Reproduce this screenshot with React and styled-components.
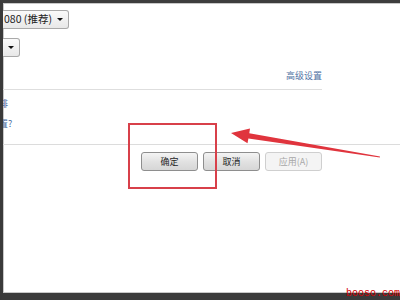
import React from 'react';
import styled, { createGlobalStyle } from 'styled-components';

const Global = createGlobalStyle`
  html, body {
    margin: 0;
    padding: 0;
    background: #ffffff;
  }
  body {
    font-family: "Noto Sans CJK SC", "Noto Sans", sans-serif;
  }
`;

export default function App() {
  return (
    <>
      <Global />
      <Page>
        <Frame>
          <Select $width={66}>
            <SelectText>080 (推荐)</SelectText>
            <Caret />
          </Select>
          <Select $width={17} $gap={9}>
            <Caret />
          </Select>
          <LinkRow>
            <Link>高级设置</Link>
          </LinkRow>
          <Rule />
          <Clipped $top={8}>排</Clipped>
          <Clipped $top={8}>置?</Clipped>
          <Separator />
          <Buttons>
            <Button>确定</Button>
            <Button>取消</Button>
            <Button disabled>应用(A)</Button>
          </Buttons>
        </Frame>

        <Highlight />
        <Arrow viewBox="0 0 400 300">
          <polygon
            points="231,133 250,128.6 249.3,133.3 380,156.4 379.8,157.6 248.4,138.4 247.5,143.2"
            fill="#e0343d"
          />
        </Arrow>
        <Watermark>booso.com</Watermark>
      </Page>
    </>
  );
}

const Page = styled.div`
  position: relative;
  width: 400px;
  height: 300px;
  overflow: hidden;
`;

const Frame = styled.div`
  box-sizing: border-box;
  width: 400px;
  height: 300px;
  overflow: hidden;
  background: #ffffff;
  border-top: 3px solid #3d3d3d;
  border-left: 3px solid #3a3a3a;
  border-bottom: 7px solid #3b3b3b;
  box-shadow: inset 1px 1px 0 #c8c8c8, inset 0 -1px 0 #c8c8c8;
  display: flex;
  flex-direction: column;
`;

const Select = styled.div`
  box-sizing: border-box;
  width: ${(p) => p.$width}px;
  height: 19px;
  margin-top: ${(p) => p.$gap || 7}px;
  display: flex;
  align-items: center;
  justify-content: space-between;
  border: 1px solid #a9a9a9;
  border-left: none;
  border-radius: 0 3px 3px 0;
  background: linear-gradient(#fafafa, #e8e8e8);
  padding: 0 5px 0 0;
`;

const SelectText = styled.span`
  font-size: 10.5px;
  color: #222;
  padding-left: 1px;
  white-space: nowrap;
  line-height: 1;
`;

const Caret = styled.span`
  margin-left: auto;
  width: 0;
  height: 0;
  border-left: 3px solid transparent;
  border-right: 3px solid transparent;
  border-top: 3px solid #111;
`;

const LinkRow = styled.div`
  width: 319px;
  margin-top: 13px;
  display: flex;
  justify-content: flex-end;
`;

const Link = styled.span`
  font-size: 9px;
  line-height: 12px;
  color: #4f72a4;
`;

const Rule = styled.div`
  width: 319px;
  height: 1px;
  margin-top: 7px;
  background: #dedede;
`;

const Clipped = styled.div`
  margin-top: ${(p) => p.$top}px;
  margin-left: -4px;
  font-size: 9px;
  line-height: 12px;
  color: #4a6aa0;
`;

const Separator = styled.div`
  height: 1px;
  margin-top: 14px;
  background: #dcdcdc;
`;

const Buttons = styled.div`
  width: 319px;
  margin-top: 7px;
  display: flex;
  justify-content: flex-end;
  gap: 5px;
`;

const Button = styled.button`
  box-sizing: border-box;
  width: 57px;
  height: 19px;
  padding: 0;
  border: 1px solid ${(p) => (p.disabled ? '#cfcfcf' : '#8e8e8e')};
  border-radius: 3px;
  background: ${(p) =>
    p.disabled ? '#f4f4f4' : 'linear-gradient(#f4f4f4, #e2e2e2 50%, #d6d6d6)'};
  color: ${(p) => (p.disabled ? '#a8a8a8' : '#1e1e1e')};
  font-family: "Noto Sans CJK SC", "Noto Sans", sans-serif;
  font-size: 9px;
  line-height: 1;
`;

const Highlight = styled.div`
  position: absolute;
  left: 128px;
  top: 123px;
  width: 89px;
  height: 66px;
  box-sizing: border-box;
  border: 2px solid #d8404a;
`;

const Arrow = styled.svg`
  position: absolute;
  left: 0;
  top: 0;
  width: 400px;
  height: 300px;
  pointer-events: none;
`;

const Watermark = styled.span`
  position: absolute;
  right: 0;
  bottom: 1px;
  font-family: "Liberation Mono", monospace;
  font-size: 10px;
  line-height: 11px;
  color: #d40000;
`;
